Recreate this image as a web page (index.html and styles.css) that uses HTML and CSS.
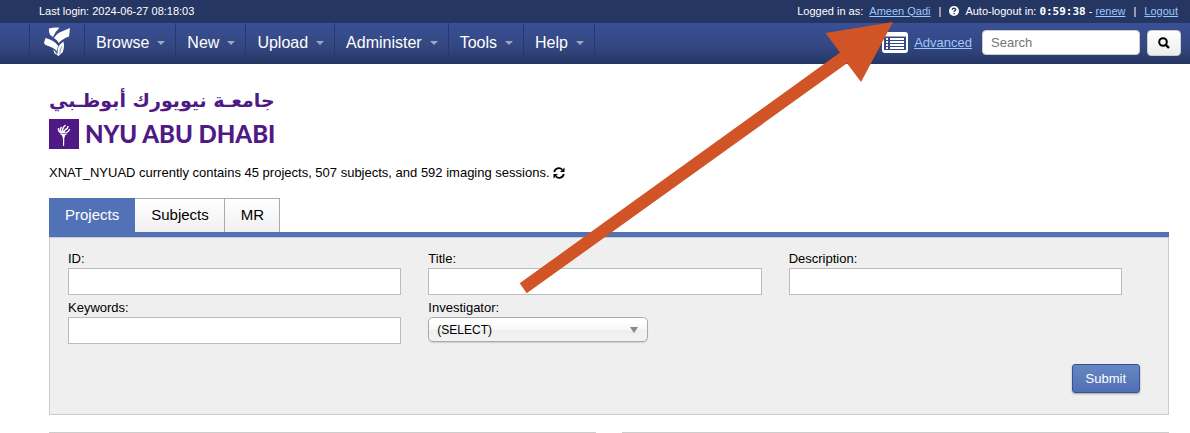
FILE: index.html
```html
<!DOCTYPE html>
<html lang="en">
<head>
<meta charset="utf-8">
<title>XNAT_NYUAD</title>
<link rel="stylesheet" href="styles.css">
</head>
<body>
<div class="user-bar">
  <span class="last-login">Last login: 2024-06-27 08:18:03</span>
  <div class="user-info">
    <span>Logged in as: &nbsp;<a href="#">Ameen Qadi</a></span>
    <span class="divider">|</span>
    <svg class="help-icon" viewBox="0 0 10 10" aria-hidden="true"><circle cx="5" cy="5" r="5" fill="#fff"/><path d="M3.2 3.8C3.4 1.7 6.8 1.9 6.7 3.8C6.6 4.8 5.1 4.8 5.1 6M5.1 7v1.3" fill="none" stroke="#253663" stroke-width="1.4"/></svg>
    <span class="timer">Auto-logout in: <b>0:59:38</b> - <a href="#">renew</a></span>
    <span class="divider">|</span>
    <a href="#">Logout</a>
  </div>
</div>
<header class="main-nav">
  <nav class="menu">
    <a class="home" href="#" aria-label="Home"><svg viewBox="0 0 27 30" fill="#fff"><path d="M5 1.5Q10 .3 15.5.7Q11.5 4 9 10L6.2 8Q4.5 5 5 1.5ZM26 1L25 9.5Q18 12 14.8 16Q13 12.6 9.8 11Q12 6.8 16 5.2ZM1.5 11Q11 13.5 14.3 19Q13.2 21 13 24.2Q9 20 2.8 18.5Q0 17 0 16Z"/><path d="M19.3 14.5Q21 19 18.7 25.2L14.5 29L10.5 26.5L9.3 22.7Q12.6 24.4 13.4 27L14 21Q15.4 17.3 19.3 14.5Z"/><path d="M17.6 19.5Q16 22.5 15.8 27M11.2 24L13 28" fill="none" stroke="#334788" stroke-width=".6"/></svg></a>
    <button type="button">Browse</button>
    <button type="button">New</button>
    <button type="button">Upload</button>
    <button type="button">Administer</button>
    <button type="button">Tools</button>
    <button type="button">Help</button>
  </nav>
  <form class="search">
    <a href="#" class="stored" aria-label="Stored searches"><svg viewBox="0 0 26 21"><rect width="26" height="21" rx="3" fill="#fff"/><path d="M2 4.5h22v13.5H2z" fill="#344887"/><path d="M4 7h2M8 7h14M4 10h2M8 10h14M4 13h2M8 13h14M4 16h2M8 16h14" stroke="#fff" stroke-width="1.8"/></svg></a>
    <a href="#" class="advanced">Advanced</a>
    <input type="text" placeholder="Search" aria-label="Search">
    <button type="submit" aria-label="Run search"><svg viewBox="0 0 12 12" fill="none" stroke="#000" stroke-width="2"><circle cx="5" cy="5" r="3.8"/><path d="M7.8 7.8L11 11" stroke-width="2.4"/></svg></button>
  </form>
</header>
<main class="page">
  <div class="brand">
    <div class="brand-ar" lang="ar" dir="rtl">جامعـة نيويورك أبوظـبي</div>
    <div class="brand-en">
      <svg class="torch" viewBox="0 0 30 30"><path d="M0 0h30v30H0z" fill="#4f1a85"/><path d="M12.8 16h3.6l-1.1 3-.2 8h-1l-.2-8z" fill="#fff"/><path d="M9.5 9Q9 12.500 12.500 14M12.500 8Q10 11 13.500 14M16.500 6Q12 10 14.500 14M19 7Q19 9.500 16.500 10.500Q14.500 12 15.500 14M20.500 10Q20 13 16.500 14" fill="none" stroke="#fff" stroke-width="1.400"/><path d="M11.500 15.300h6" stroke="#fff" stroke-width="1.300"/></svg>
      <span>NYU ABU DHABI</span>
    </div>
  </div>
  <p class="summary">XNAT_NYUAD currently contains 45 projects, 507 subjects, and 592 imaging sessions.
    <svg class="refresh" viewBox="0 0 12 12" aria-label="Refresh"><path d="M1.2 5A4.7 4.7 0 0 1 9.2 2.6M10.8 7A4.7 4.7 0 0 1 2.8 9.4" fill="none" stroke="#000" stroke-width="1.8"/><path d="M11.5.5V5H7zM.5 11.5V7H5z"/></svg>
  </p>
  <div class="tabs" role="tablist">
    <button type="button" role="tab" aria-selected="true" class="active">Projects</button>
    <button type="button" role="tab" aria-selected="false">Subjects</button>
    <button type="button" role="tab" aria-selected="false">MR</button>
  </div>
  <form class="panel">
    <div class="fields">
      <div class="field"><label for="id">ID:</label><input id="id" type="text"></div>
      <div class="field"><label for="title">Title:</label><input id="title" type="text"></div>
      <div class="field"><label for="description">Description:</label><input id="description" type="text"></div>
      <div class="field"><label for="keywords">Keywords:</label><input id="keywords" type="text"></div>
      <div class="field"><label for="investigator">Investigator:</label>
        <div class="select"><select id="investigator"><option>(SELECT)</option></select></div>
      </div>
    </div>
    <div class="actions"><button type="submit">Submit</button></div>
  </form>
  <div class="lists"><section></section><section></section></div>
</main>
<svg class="pointer" width="400" height="290" viewBox="510 10 400 290" aria-hidden="true"><path d="M519.7 283.3L840 52.5L825.5 33L893 22L861 82L847 63.3L526.7 293.3Z" fill="#d05426"/></svg>
</body>
</html>
```
FILE: styles.css
```css
* { box-sizing: border-box; }
body {
  margin: 0;
  position: relative;
  background: #fff;
  color: #000;
  font: 13px/16px "Liberation Sans", Arial, sans-serif;
}
button, input, select { font: inherit; color: inherit; }
svg { display: block; }

.user-bar {
  display: flex;
  justify-content: space-between;
  align-items: center;
  height: 23px;
  padding: 0 12px 2px 39px;
  background: #253663;
  color: #fff;
  font-size: 11px;
}
.user-bar a, .advanced { color: #9bc8ff; }
.user-info { display: flex; align-items: center; }
.divider { margin: 0 8px; }
.help-icon { width: 10px; height: 10px; margin-right: 6px; }
.timer b { font: bold 11px "DejaVu Sans Mono", monospace; }

.main-nav {
  display: flex;
  justify-content: space-between;
  height: 41px;
  padding: 0 9px 0 29px;
  background: linear-gradient(#3a5096, #33467f 60%, #253663);
}
.menu { display: flex; border-left: 1px solid #26386e; }
.home {
  display: flex;
  align-items: center;
  padding: 0 13px 3px 14px;
  border-right: 1px solid #26386e;
}
.home svg { width: 27px; height: 30px; }
.menu button {
  display: flex;
  align-items: center;
  gap: 8px;
  padding: 0 10px 1px 11px;
  border: 0;
  border-right: 1px solid #26386e;
  background: none;
  color: #fff;
  font-size: 16px;
}
.menu button::after {
  content: "";
  border: 4px solid transparent;
  border-top-color: #a0a7b8;
  border-bottom: 0;
}
.search { display: flex; align-items: center; padding-bottom: 2px; }
.stored svg { width: 26px; height: 21px; }
.stored { margin-right: 6px; }
.advanced { margin-right: 10px; }
.search input {
  width: 158px;
  height: 25px;
  padding: 0 8px;
  border: 1px solid #ccc;
  border-radius: 4px;
  background: #fff;
}
.search input::placeholder { color: #757575; }
.search button {
  display: grid;
  place-items: center;
  width: 34px;
  height: 26px;
  margin-left: 7px;
  padding: 0;
  border: 1px solid #ccc;
  border-radius: 4px;
  background: linear-gradient(#fff, #ededed);
}
.search button svg { width: 12px; height: 12px; }

.page { padding: 27px 21px 0 49px; }
.brand { color: #4f1a85; }
.brand-ar {
  width: max-content;
  height: 28px;
  font: bold 19px/18px "DejaVu Sans", sans-serif;
}
.brand-en {
  display: flex;
  align-items: center;
  gap: 6px;
  font: 900 24px/30px Lato, sans-serif;
  white-space: nowrap;
}
.torch { width: 30px; height: 30px; }
.summary { display: flex; align-items: center; gap: 3px; margin: 16px 0 17px; }
.refresh { width: 12px; height: 12px; }

.tabs { display: flex; border-bottom: 5px solid #5272b8; }
.tabs button {
  height: 34px;
  padding: 0 15px 1px 16px;
  border: 1px solid #aaa;
  border-width: 1px 1px 0 0;
  background: linear-gradient(#fff, #f0f0f0);
  font-size: 15px;
}
.tabs .active { border-color: #5272b8; background: #5272b8; color: #fff; }

.panel {
  padding: 13px 28px 21px 18px;
  border: 1px solid #ccc;
  background: #efefef;
}
.fields {
  display: grid;
  grid-template-columns: repeat(3, 1fr);
  gap: 5px 27px;
  margin-right: 18px;
}
.field label { display: block; height: 17px; }
.field input {
  display: block;
  width: 100%;
  height: 27px;
  padding: 0 6px;
  border: 1px solid #bbb;
  background: #fff;
}
.select { position: relative; width: 220px; }
.select select {
  display: block;
  width: 100%;
  height: 25px;
  padding: 0 8px;
  appearance: none;
  border: 1px solid #aaa;
  border-radius: 5px;
  background: linear-gradient(#fff 20%, #f6f6f6 50%, #eee 52%, #f4f4f4);
  box-shadow: 0 1px 1px #0002;
  font-size: 12px;
}
.select::after {
  content: "";
  position: absolute;
  top: 10px;
  right: 10px;
  border: 4px solid transparent;
  border-top: 6px solid #888;
  border-bottom: 0;
  pointer-events: none;
}
.actions { display: flex; justify-content: flex-end; margin-top: 20px; }
.actions button {
  height: 29px;
  padding: 0 13px;
  border: 1px solid #3a5096;
  border-radius: 3px;
  background: linear-gradient(#6687c2, #5070b5);
  box-shadow: 0 1px 2px #0005;
  color: #fff;
}
.lists { display: grid; grid-template-columns: 1fr 1fr; gap: 26px; margin-top: 17px; }
.lists section { border-top: 1px solid #ccc; }
.pointer { position: absolute; top: 10px; left: 510px; pointer-events: none; }
```
